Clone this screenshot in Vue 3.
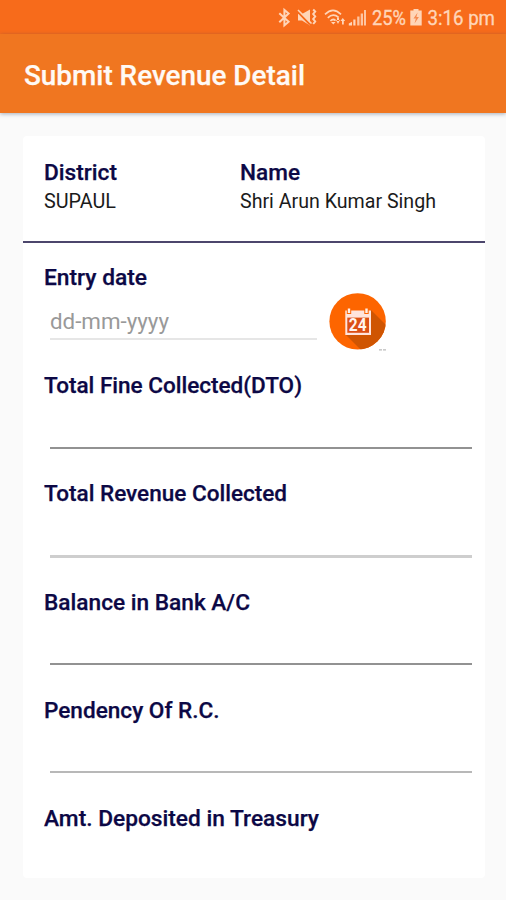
<script setup>
const amounts = [
  { label: 'Total Fine Collected(DTO)', tone: 'dark', width: 258 },
  { label: 'Total Revenue Collected', tone: 'pale', width: 243 },
  { label: 'Balance in Bank A/C', tone: 'dark', width: 206 },
  { label: 'Pendency Of R.C.', tone: 'mid', width: 175.5 },
  { label: 'Amt. Deposited in Treasury', tone: 'none', width: 275 },
]
</script>

<template>
  <div class="screen">
    <header class="status">
      <svg class="status-icons" width="240" height="34" viewBox="266 0 240 34">
        <g fill="none" stroke="#ffd5b8" stroke-width="2">
          <path d="M279.3 13.2 L288.6 21.8 L284.4 25.4 V10 L288.6 13.6 L279.3 22.2" />
          <path d="M313.2 9.5 l2 2 -2 2.5 2 2.5 -2 2.5 2 2.5 -2 2.5" />
          <path d="M325 14.4 Q333 6.4 341 14.4" stroke-width="1.7" />
          <path d="M327.8 17.8 Q333 12.6 338.6 17.3" stroke-width="1.7" />
          <path d="M330.4 21 Q333 18.2 335.6 20.6" stroke-width="1.7" />
        </g>
        <g fill="#ffd5b8">
          <path d="M298 14 h4 l8 -4.5 v16 l-8 -5 h-4z" />
          <path d="M331 22 h4.6 l-2.3 2.6z M337 21 v-3.5 h2 v3.5z M336 20 l2 4 2 -4z M342 24.5 v-3.5 h-1.6 l2.4 -3 2.4 3 h-1.4 v3.5z" />
          <path d="M348.8 25.5 v-2 l3.2 -1.8 v3.8z M353.3 25.5 v-6 h2.2 v6z" />
          <path d="M357.2 25.5 v-9 h2.3 v9z M360.7 25.5 v-12 h2.3 v12z M364 25.5 v-15.5 h2 v15.5z" opacity=".85" />
          <path d="M413.5 9 h5 v1.5 h3.2 v15 h-11.4 v-15 h3.2z" />
        </g>
        <path d="M297.5 11.5 L310 24.5" stroke="#f76b1b" stroke-width="2" />
        <path d="M298 10 L311.5 23.5" stroke="#ffd5b8" stroke-width="1.6" />
        <path d="M417.6 12.5 l-4.1 6 h2.4 l-1.4 5 4.4 -6.5 h-2.5z" fill="#f58b52" />
        <g class="status-text">
          <text x="372" y="25" textLength="34" lengthAdjust="spacingAndGlyphs">25%</text>
          <text x="427.5" y="25" textLength="67.5" lengthAdjust="spacingAndGlyphs">3:16 pm</text>
        </g>
      </svg>
    </header>

    <div class="toolbar">
      <svg class="title" width="290" height="36" role="heading">
        <text x="0" y="26.5" textLength="281" lengthAdjust="spacingAndGlyphs">Submit Revenue Detail</text>
      </svg>
    </div>

    <main class="card">
      <section class="person">
        <div class="district">
          <svg class="label" width="100" height="28"><text x="0" y="21" textLength="73" lengthAdjust="spacingAndGlyphs">District</text></svg>
          <svg class="value" width="100" height="28"><text x="0" y="21" textLength="72" lengthAdjust="spacingAndGlyphs">SUPAUL</text></svg>
        </div>
        <div>
          <svg class="label" width="200" height="28"><text x="0" y="21" textLength="60" lengthAdjust="spacingAndGlyphs">Name</text></svg>
          <svg class="value" width="200" height="28"><text x="0" y="21" textLength="196" lengthAdjust="spacingAndGlyphs">Shri Arun Kumar Singh</text></svg>
        </div>
      </section>

      <section class="entry">
        <svg class="label" width="200" height="28"><text x="0" y="21" textLength="103" lengthAdjust="spacingAndGlyphs">Entry date</text></svg>
        <div class="date-row">
          <div class="date-input">
            <svg class="hint" width="200" height="28"><text x="0" y="21" textLength="119" lengthAdjust="spacingAndGlyphs">dd-mm-yyyy</text></svg>
          </div>
          <svg class="calendar" width="60" height="62" viewBox="328 291 60 62">
            <defs>
              <clipPath id="disc"><circle cx="357.6" cy="321.4" r="28.2" /></clipPath>
            </defs>
            <circle cx="357.6" cy="321.4" r="28.2" fill="#fd6500" />
            <path clip-path="url(#disc)" d="M371 310 L400 339 V365 H376 L346 335z" fill="#cf5502" />
            <path d="M345.3 310.5 h25.7 v24.5 h-25.7z" fill="#ffe4dc" />
            <path d="M347.3 317.6 h21.7 v15.2 h-21.7z" fill="#dc4f14" />
            <path d="M349 308.5 v5.5 M366.5 308.5 v5.5" stroke="#fd6500" stroke-width="4.4" />
            <path d="M349 308.5 v4.5 M366.5 308.5 v4.5" stroke="#fff0e8" stroke-width="2.4" />
            <text class="day" x="348.8" y="331.3" textLength="17.8" lengthAdjust="spacingAndGlyphs">24</text>
            <path d="M379 349.8 h3 M383 349.8 h3" stroke="#bbb" stroke-width="1.2" />
          </svg>
        </div>
      </section>

      <section v-for="a in amounts" :key="a.label" class="amount">
        <svg class="label" width="400" height="28"><text x="0" y="21" :textLength="a.width" lengthAdjust="spacingAndGlyphs">{{ a.label }}</text></svg>
        <div class="line" :class="a.tone"></div>
      </section>
    </main>
  </div>
</template>

<style>
body { background: #fafafa; }
</style>

<style scoped>
.screen {
  box-sizing: border-box;
  width: 506px;
  height: 900px;
  overflow: hidden;
  background: #fafafa;
  font-family: Roboto, "Liberation Sans", sans-serif;
}
svg { display: block; overflow: visible; }
.status {
  display: flex;
  justify-content: flex-end;
  height: 34px;
  background: #f76b1b;
}
.status-text {
  font-size: 20.5px;
  fill: #ffd5b8;
  stroke: #ffd5b8;
  stroke-width: .35px;
}
.toolbar {
  height: 78.5px;
  box-sizing: border-box;
  padding: 24px 0 0 23.5px;
  background: #f07620;
  box-shadow: 0 1px 4px rgba(40, 60, 90, .4);
}
.title text {
  font-size: 27.5px;
  font-weight: 500;
  fill: #fffaf5;
  stroke: #fffaf5;
  stroke-width: .25px;
}
.card {
  box-sizing: border-box;
  width: 461.5px;
  height: 742px;
  margin: 23.5px 0 0 23px;
  border-radius: 4px;
  background: #fff;
}
.person {
  display: flex;
  box-sizing: border-box;
  height: 107px;
  padding: 23px 0 0 21px;
  border-bottom: 2px solid #4c466c;
}
.district { width: 196px; }
.label text {
  font-size: 22.5px;
  font-weight: 500;
  fill: #0c0845;
  stroke: #0c0845;
  stroke-width: .25px;
}
.value text { font-size: 19.7px; fill: #1b1b1b; }
.entry { height: 129px; box-sizing: border-box; padding: 20.5px 0 0 21px; }
.date-row { display: flex; gap: 11px; }
.date-input {
  box-sizing: border-box;
  width: 267px;
  height: 48px;
  margin-left: 6px;
  padding-top: 16px;
  border-bottom: 2px solid #e6e6e6;
}
.hint text { font-size: 22.3px; fill: #999; }
.calendar { margin-top: -1px; }
.day { font-size: 18.5px; font-weight: 700; fill: #fff4ee; }
.amount { height: 108.25px; padding-left: 21px; }
.line { width: 422px; height: 2px; margin: 46.6px 0 0 6px; }
.dark { background: #929292; }
.mid { background: #b8b8b8; }
.pale { height: 3px; background: #cecece; }
.none { display: none; }
</style>
